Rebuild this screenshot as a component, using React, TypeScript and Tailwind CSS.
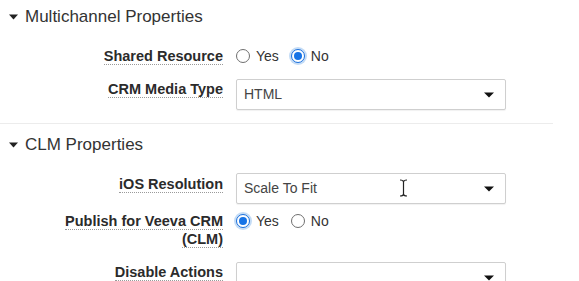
import React from 'react';

function Caret() {
  return (
    <svg width="9" height="6" viewBox="0 0 9 6" className="shrink-0">
      <path d="M0 0.5 L9 0.5 L4.5 5.5 Z" fill="#222" />
    </svg>
  );
}

function SectionHeader({ title, className = '' }: { title: string; className?: string }) {
  return (
    <div className={`flex items-center h-[34px] pl-[9px] gap-[7px] ${className}`}>
      <Caret />
      <span className="text-[17px] text-[#333]">{title}</span>
    </div>
  );
}

function Label({ children }: { children: React.ReactNode }) {
  return (
    <div className="w-[223px] shrink-0 pl-[50px] text-right text-[14.5px] leading-[18px] font-bold text-[#2b2b2b]">
      <span className="border-b border-dotted border-[#9a9a9a]">{children}</span>
    </div>
  );
}

function Radio({ checked, label }: { checked?: boolean; label: string }) {
  return (
    <div className="flex items-center gap-[6px]">
      {checked ? (
        <span className="w-[14px] h-[14px] rounded-full border border-[#1a6fdc] bg-white flex items-center justify-center shadow-[0_0_0_2px_#c4dcf6]">
          <span className="w-[8px] h-[8px] rounded-full bg-[#1673e6]" />
        </span>
      ) : (
        <span className="w-[14px] h-[14px] rounded-full border border-[#6f6f6f] bg-white" />
      )}
      <span className="text-[14px] leading-[18px] text-[#333]">{label}</span>
    </div>
  );
}

function RadioPair({ yes }: { yes: boolean }) {
  return (
    <div className="ml-[13px] flex items-center gap-[12px] h-[18px]">
      <Radio checked={yes} label="Yes" />
      <Radio checked={!yes} label="No" />
    </div>
  );
}

function Select({ value, cursor }: { value: string; cursor?: boolean }) {
  return (
    <div className="relative ml-[13px] w-[270px] h-[31px] border border-[#cfcfcf] rounded-[2px] bg-white shadow-[0_1px_1px_rgba(0,0,0,0.06)] flex items-center justify-between pl-[7px] pr-[11px]">
      <span className="text-[14px] text-[#444]">{value}</span>
      <svg width="10" height="6" viewBox="0 0 10 6">
        <path d="M0 0.5 L10 0.5 L5 5.5 Z" fill="#111" />
      </svg>
      {cursor && (
        <svg className="absolute left-[162px] top-[5px]" width="9" height="18" viewBox="0 0 9 18">
          <path d="M1 1 Q4.5 1 4.5 3 L4.5 15 Q4.5 17 1 17 M8 1 Q4.5 1 4.5 3 M8 17 Q4.5 17 4.5 15" stroke="#222" strokeWidth="1.2" fill="none" />
        </svg>
      )}
    </div>
  );
}

export default function App() {
  return (
    <div className="w-[579px] h-[281px] overflow-hidden bg-white font-['Liberation_Sans',Arial,sans-serif]">
      <SectionHeader title="Multichannel Properties" />

      <div className="mt-[13px] flex items-center">
        <Label>Shared Resource</Label>
        <RadioPair yes={false} />
      </div>

      <div className="mt-[14px] flex items-start">
        <div className="pt-[1px]">
          <Label>CRM Media Type</Label>
        </div>
        <Select value="HTML" />
      </div>

      <div className="mt-[13px] w-[553px] border-t border-[#ececec]" />

      <SectionHeader title="CLM Properties" className="mt-[4px]" />

      <div className="mt-[11px] flex items-start">
        <div className="pt-[2px]">
          <Label>iOS Resolution</Label>
        </div>
        <Select value="Scale To Fit" cursor />
      </div>

      <div className="mt-[8px] flex items-start">
        <Label>Publish for Veeva CRM (CLM)</Label>
        <RadioPair yes />
      </div>

      <div className="mt-[14px] flex items-start">
        <div className="pt-[1px]">
          <Label>Disable Actions</Label>
        </div>
        <Select value="" />
      </div>
    </div>
  );
}
